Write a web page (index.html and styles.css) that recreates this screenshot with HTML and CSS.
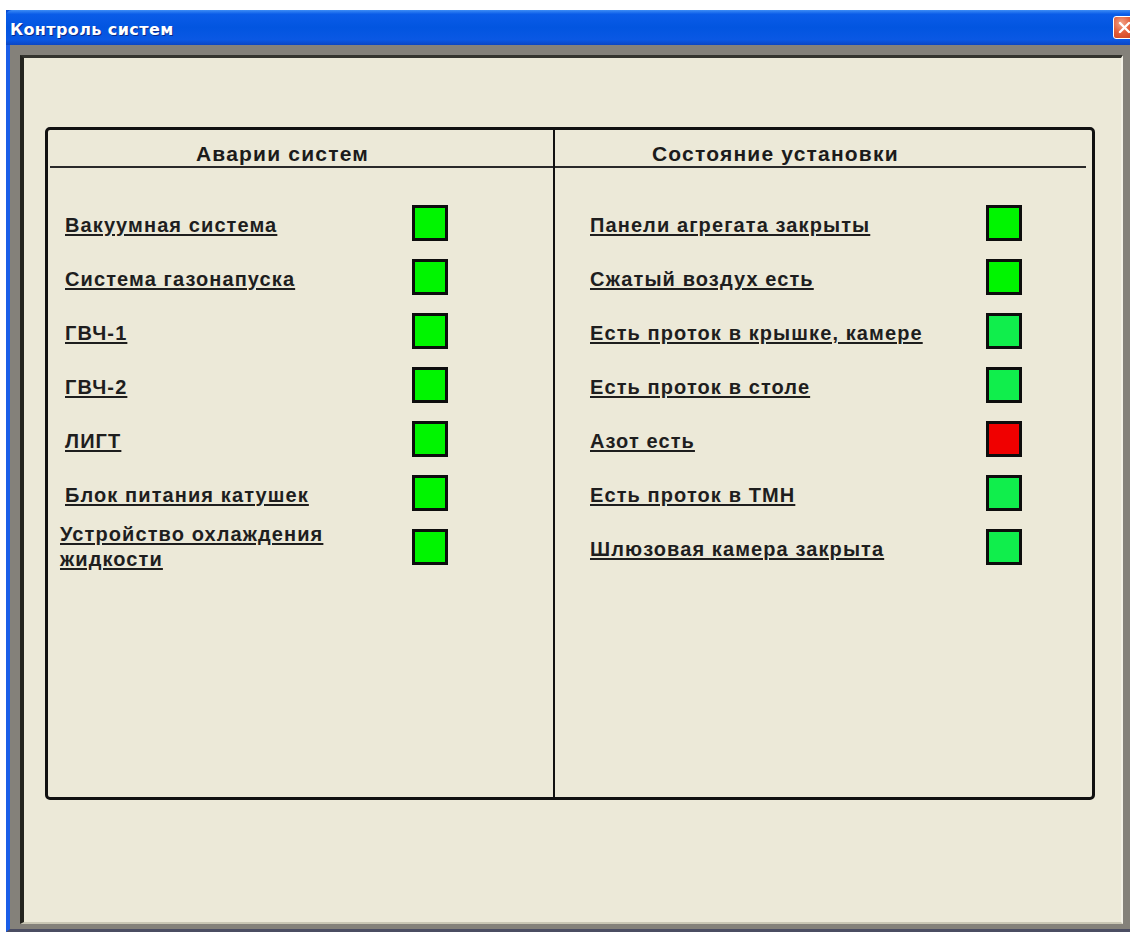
FILE: index.html
```html
<!DOCTYPE html>
<html lang="ru">
<head>
<meta charset="utf-8">
<title>Контроль систем</title>
<link rel="stylesheet" href="styles.css">
</head>
<body>
<div class="window">
  <div class="titlebar">
    <span class="title">Контроль систем</span>
    <span class="close" aria-label="Закрыть">
      <svg width="21" height="21" viewBox="0 0 21 21">
        <path d="M6 6 L15 15 M15 6 L6 15" stroke="#fff" stroke-width="2.4" stroke-linecap="round"/>
      </svg>
    </span>
  </div>
  <div class="frame">
    <div class="client">
      <div class="panel">
        <section class="col col-left">
          <h2 class="col-head">Аварии систем</h2>
          <ul class="rows">
            <li class="row"><span class="label">Вакуумная система</span><span class="lamp ok"></span></li>
            <li class="row"><span class="label">Система газонапуска</span><span class="lamp ok"></span></li>
            <li class="row"><span class="label">ГВЧ-1</span><span class="lamp ok"></span></li>
            <li class="row"><span class="label">ГВЧ-2</span><span class="lamp ok"></span></li>
            <li class="row"><span class="label">ЛИГТ</span><span class="lamp ok"></span></li>
            <li class="row"><span class="label">Блок питания катушек</span><span class="lamp ok"></span></li>
            <li class="row row-wide"><span class="label">Устройство охлаждения жидкости</span><span class="lamp ok"></span></li>
          </ul>
        </section>
        <section class="col col-right">
          <h2 class="col-head">Состояние установки</h2>
          <ul class="rows">
            <li class="row"><span class="label">Панели агрегата закрыты</span><span class="lamp ok"></span></li>
            <li class="row"><span class="label">Сжатый воздух есть</span><span class="lamp ok"></span></li>
            <li class="row"><span class="label">Есть проток в крышке, камере</span><span class="lamp on"></span></li>
            <li class="row"><span class="label">Есть проток в столе</span><span class="lamp on"></span></li>
            <li class="row"><span class="label">Азот есть</span><span class="lamp alarm"></span></li>
            <li class="row"><span class="label">Есть проток в ТМН</span><span class="lamp on"></span></li>
            <li class="row"><span class="label">Шлюзовая камера закрыта</span><span class="lamp on"></span></li>
          </ul>
        </section>
      </div>
    </div>
  </div>
</div>
</body>
</html>
```
FILE: styles.css
```css
html, body {
  margin: 0;
  padding: 0;
  background: #ffffff;
  overflow: hidden;
}

.window {
  margin: 10px 0 0 6px;
  width: 1128px;
  height: 922px;
  display: flex;
  flex-direction: column;
  background: #0a4fd6;
}

/* XP-style caption */
.titlebar {
  height: 35px;
  flex: none;
  display: flex;
  align-items: center;
  justify-content: space-between;
  padding: 3px 0 0 4px;
  box-sizing: border-box;
  background: linear-gradient(#3d8cf5 0%, #0a5ce8 12%, #0255e0 50%, #0a58e4 85%, #0b46c2 100%);
  border-radius: 6px 0 0 0;
}

.title {
  color: #ffffff;
  font-family: "DejaVu Sans", Verdana, sans-serif;
  font-weight: bold;
  font-size: 16px;
  letter-spacing: 0.4px;
  text-shadow: 1px 1px 0 #0a2a8a;
}

.close {
  width: 21px;
  height: 21px;
  margin: -3px -2px 0 0;
  border: 1px solid #ffffff;
  border-radius: 3px;
  background: radial-gradient(circle at 35% 30%, #f3a58a 0%, #e3603c 45%, #c93c1a 100%);
  display: flex;
}

/* grey frame and sunken client edge */
.frame {
  flex: 1;
  display: flex;
  padding: 10px 11px 5px 10px;
  background: #84817a;
  border-left: 4px solid #1a5ee8;
  border-bottom: 3px solid #4b4d62;
}

.client {
  flex: 1;
  background: #ece9d8;
  border-top: 3px solid #34342e;
  border-left: 4px solid #24241f;
  border-right: 2px solid #f3f1e6;
  border-bottom: 2px solid #c9c6b4;
  padding: 69px 0 0 21px;
}

.panel {
  width: 1044px;
  height: 667px;
  display: flex;
  border: 3px solid #111111;
  border-radius: 5px;
}

.col {
  display: flex;
  flex-direction: column;
}

.col-left {
  width: 505px;
  border-right: 2px solid #111111;
}

.col-right {
  flex: 1;
}

.col-head {
  margin: 0;
  height: 24px;
  padding-top: 12px;
  line-height: 24px;
  font-family: "Liberation Sans", Arial, sans-serif;
  font-weight: bold;
  font-size: 21px;
  letter-spacing: 1.2px;
  color: #1b1b1b;
  border-bottom: 2px solid #2a2a2a;
}

.col-left .col-head {
  padding-left: 146px;
  margin-left: 2px;
}

.col-right .col-head {
  padding-left: 97px;
  margin-right: 6px;
}

.rows {
  list-style: none;
  margin: 0;
  padding: 37px 0 0 0;
  display: flex;
  flex-direction: column;
  gap: 18px;
}

.row {
  display: flex;
  align-items: center;
  height: 36px;
}

.col-left .row {
  padding-left: 17px;
}

.col-right .row {
  padding-left: 35px;
}

.label {
  font-family: "Liberation Sans", Arial, sans-serif;
  font-weight: bold;
  font-size: 20px;
  line-height: 25px;
  letter-spacing: 1.1px;
  color: #1e1e1e;
  text-decoration: underline;
  text-decoration-thickness: 2px;
  text-underline-offset: 2px;
  padding-top: 4px;
}

.col-left .label {
  width: 347px;
}

.col-right .label {
  width: 396px;
}

.col-left .row-wide {
  padding-left: 12px;
}

.col-left .row-wide .label {
  width: 295px;
  margin-right: 57px;
  padding-top: 0;
}

.lamp {
  width: 30px;
  height: 30px;
  border: 3px solid #0d0d0d;
  flex: none;
}

.lamp.ok { background: #00f500; }
.lamp.on { background: #10ee4c; }
.lamp.alarm { background: #f00000; }
```
